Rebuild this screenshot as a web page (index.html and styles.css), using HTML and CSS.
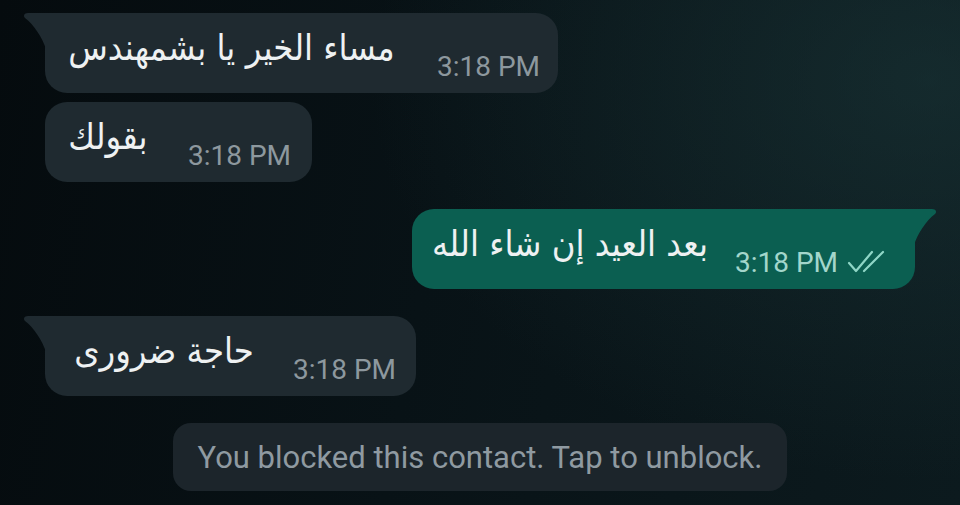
FILE: index.html
```html
<!DOCTYPE html>
<html lang="en">
<head>
<meta charset="utf-8">
<link rel="stylesheet" href="styles.css">
</head>
<body>
<div class="chat">
  <div class="row in">
    <div class="bubble in tail b1">
      <span class="msg" dir="rtl">مساء الخير يا بشمهندس</span>
      <span class="time">3:18 PM</span>
    </div>
  </div>
  <div class="row in gap-s">
    <div class="bubble in b2">
      <span class="msg" dir="rtl">بقولك</span>
      <span class="time">3:18 PM</span>
    </div>
  </div>
  <div class="row out">
    <div class="bubble out tail b3">
      <span class="msg" dir="rtl">بعد العيد إن شاء الله</span>
      <span class="time">3:18 PM</span>
      <svg class="ticks" width="42" height="24" viewBox="0 0 42 24">
        <path d="M2 13 L9 21 L25 2" fill="none" stroke="currentColor" stroke-width="2.2" stroke-linecap="round" stroke-linejoin="round"/>
        <path d="M17 21 L36 2" fill="none" stroke="currentColor" stroke-width="2.2" stroke-linecap="round" stroke-linejoin="round"/>
      </svg>
    </div>
  </div>
  <div class="row in">
    <div class="bubble in tail b4">
      <span class="msg" dir="rtl">حاجة ضرورى</span>
      <span class="time">3:18 PM</span>
    </div>
  </div>
  <div class="row center">
    <div class="system">You blocked this contact. Tap to unblock.</div>
  </div>
</div>
</body>
</html>
```
FILE: styles.css
```css
html, body {
  margin: 0;
  padding: 0;
  width: 960px;
  height: 505px;
  overflow: hidden;
}
body {
  background:
    radial-gradient(ellipse 560px 400px at 930px 80px, rgba(30, 60, 62, 0.5), rgba(20, 40, 44, 0) 100%),
    linear-gradient(100deg, #050b0e 0%, #081216 45%, #0c1a1e 100%);
  font-family: Roboto, "Liberation Sans", sans-serif;
}
.chat {
  display: flex;
  flex-direction: column;
  padding-top: 13px;
}
.row {
  display: flex;
  margin-top: 27px;
}
.row:first-child { margin-top: 0; }
.row.gap-s { margin-top: 9px; }
.row.in { padding-left: 45px; }
.row.out { justify-content: flex-end; padding-right: 45px; }
.row.center { padding-left: 173px; }

.bubble {
  position: relative;
  display: flex;
  align-items: flex-start;
  height: 80px;
  box-sizing: border-box;
  border-radius: 22px;
}
.bubble.in { background: #1f2a30; }
.bubble.out { background: #0b5f51; }
.bubble.in.tail { border-top-left-radius: 0; }
.bubble.out.tail { border-top-right-radius: 0; }
.bubble.in.tail::before {
  content: "";
  position: absolute;
  left: -21px;
  top: 0;
  width: 22px;
  height: 36px;
  background: #1f2a30;
  clip-path: path("M4 0 L22 0 L22 36 C18 24 10 12 1 5 C-1 3 0 0 4 0 Z");
}
.bubble.out.tail::after {
  content: "";
  position: absolute;
  right: -21px;
  top: 0;
  width: 22px;
  height: 36px;
  background: #0b5f51;
  clip-path: path("M18 0 L0 0 L0 36 C4 24 12 12 21 5 C23 3 22 0 18 0 Z");
}
.msg {
  font-family: "DejaVu Sans", "Noto Sans", sans-serif;
  font-stretch: condensed;
  font-size: 36px;
  color: #eef1f2;
  line-height: 44px;
  margin-top: 13px;
  white-space: nowrap;
}
.time {
  font-size: 28px;
  line-height: 32px;
  color: #8d989e;
  margin-top: 38px;
  white-space: nowrap;
}
.b1 { width: 513px; padding-left: 23px; }
.b1 .msg { width: 327px; text-align: center; }
.b1 .time { margin-left: 42px; }
.b2 { width: 267px; padding-left: 23px; }
.b2 .msg { width: 80px; text-align: center; }
.b2 .time { margin-left: 40px; }
.b3 { width: 503px; padding-left: 23px; }
.b3 .msg { width: 273px; text-align: center; }
.b3 .time { margin-left: 27px; color: #a3d6cb; margin-top: 38px; }
.b3 .ticks { color: #8fd6c6; margin-left: 9px; margin-top: 41px; }
.b4 { width: 371px; padding-left: 25px; }
.b4 .msg { width: 188px; text-align: center; }
.b4 .time { margin-left: 35px; }

.system {
  width: 614px;
  height: 68px;
  box-sizing: border-box;
  border-radius: 18px;
  background: #1c252b;
  color: #8f9aa1;
  font-size: 31px;
  display: flex;
  align-items: center;
  justify-content: center;
}
```
